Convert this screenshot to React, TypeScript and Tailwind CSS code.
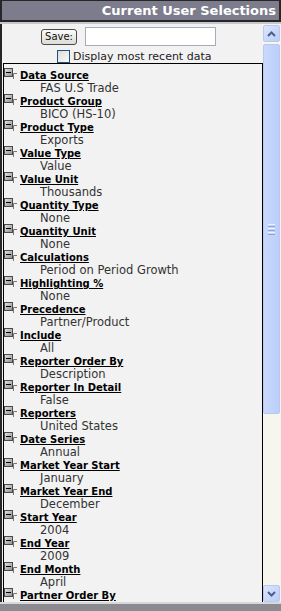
import React from "react";

const items: [string, string][] = [
  ["Data Source", "FAS U.S Trade"],
  ["Product Group", "BICO (HS-10)"],
  ["Product Type", "Exports"],
  ["Value Type", "Value"],
  ["Value Unit", "Thousands"],
  ["Quantity Type", "None"],
  ["Quantity Unit", "None"],
  ["Calculations", "Period on Period Growth"],
  ["Highlighting %", "None"],
  ["Precedence", "Partner/Product"],
  ["Include", "All"],
  ["Reporter Order By", "Description"],
  ["Reporter In Detail", "False"],
  ["Reporters", "United States"],
  ["Date Series", "Annual"],
  ["Market Year Start", "January"],
  ["Market Year End", "December"],
  ["Start Year", "2004"],
  ["End Year", "2009"],
  ["End Month", "April"],
  ["Partner Order By", "Description"],
];

function Minus() {
  return (
    <svg width="16" height="13" viewBox="0 0 16 13" className="shrink-0 -mt-[1px]">
      <defs>
        <linearGradient id="mg" x1="0" y1="0" x2="1" y2="1">
          <stop offset="0" stopColor="#e6e6e6" />
          <stop offset="1" stopColor="#8c8c8c" />
        </linearGradient>
      </defs>
      <rect x="0.5" y="0.5" width="8" height="8" fill="url(#mg)" stroke="#4a4a4a" />
      <line x1="2" y1="4.5" x2="7" y2="4.5" stroke="#000" />
      <line x1="9.5" y1="5.5" x2="9.5" y2="11" stroke="#777" />
      <line x1="9.5" y1="5.5" x2="13" y2="5.5" stroke="#777" />
    </svg>
  );
}

function Arrow({ up }: { up: boolean }) {
  return (
    <div className="w-[17px] h-[17px] rounded-[2px] border border-[#b7c9f1] bg-gradient-to-br from-[#dde7fd] to-[#b9cdf8] flex items-center justify-center">
      <svg width="9" height="6" viewBox="0 0 9 6">
        <path
          d={up ? "M1 5 L4.5 1.5 L8 5" : "M1 1 L4.5 4.5 L8 1"}
          fill="none"
          stroke="#4d6185"
          strokeWidth="2"
        />
      </svg>
    </div>
  );
}

export default function App() {
  return (
    <div
      className="w-[281px] h-[611px] bg-[#f2f2f2] overflow-hidden flex flex-col"
      style={{ fontFamily: "Verdana, 'DejaVu Sans', sans-serif" }}
    >
      {/* header */}
      <div className="h-[22px] shrink-0 border-t border-l-2 border-r-2 border-b-2 border-[#262626] bg-[#7c7c8c] flex items-center justify-end pr-[3px]">
        <span className="text-white font-bold text-[13px] leading-none">
          Current User Selections
        </span>
      </div>
      <div className="h-[2px] shrink-0 bg-[#c8c8c8]" />

      {/* body */}
      <div className="h-[578px] shrink-0 flex border-l-2 border-[#262626]">
        <div className="w-[261px] shrink-0 overflow-hidden flex flex-col">
          <div className="h-[19px] mt-[3px] flex items-center pl-[39px] gap-[8px] shrink-0">
            <button className="w-[36px] h-[16px] rounded-[3px] border border-[#4a4a4a] bg-gradient-to-b from-[#fbfbfb] to-[#dcdcd4] text-[10px] leading-none text-[#111] flex items-center justify-center">
              Save:
            </button>
            <input className="w-[131px] h-[19px] bg-white border border-[#a5acb5] outline-none" />
          </div>
          <div className="h-[14px] mt-[3px] flex items-center pl-[55px] shrink-0">
            <span className="w-[13px] h-[13px] border border-[#1c5180] bg-gradient-to-br from-[#dcdcd6] to-[#fbfbfa] shrink-0" />
            <span className="ml-[3px] text-[11px] leading-none text-[#222]">Display most recent data</span>
          </div>
          <div className="ml-[1px] border border-black pt-[5px] flex flex-col">
            {items.map(([t, v]) => (
              <div key={t} className="flex flex-col">
                <div className="h-[13px] flex items-start">
                  <Minus />
                  <span className="text-[10px] leading-[13px] font-bold underline text-black">{t}</span>
                </div>
                <div className="h-[13px] pl-[36px] text-[11.5px] leading-[13px] text-[#333]">{v}</div>
              </div>
            ))}
          </div>
        </div>

        {/* scrollbar */}
        <div className="w-[17px] shrink-0 flex flex-col pt-[1px] bg-[#f6f5ee]">
          <Arrow up />
          <div className="flex-1 flex flex-col pt-[2px] pb-[2px]">
            <div className="h-[370px] rounded-[2px] border border-[#b7c9f1] bg-gradient-to-r from-[#c9d8fc] to-[#bccff9] flex flex-col items-center justify-center gap-[1px]">
              <div className="w-[7px] h-[1px] bg-[#eef3ff]" />
              <div className="w-[7px] h-[1px] bg-[#8ca5dc]" />
              <div className="w-[7px] h-[1px] bg-[#eef3ff]" />
              <div className="w-[7px] h-[1px] bg-[#8ca5dc]" />
              <div className="w-[7px] h-[1px] bg-[#eef3ff]" />
              <div className="w-[7px] h-[1px] bg-[#8ca5dc]" />
            </div>
          </div>
          <Arrow up={false} />
        </div>
        <div className="w-[1px] shrink-0 bg-[#f4f4f4]" />
      </div>

      <div className="h-[2px] shrink-0 bg-[#d8d8d8]" />
      <div className="flex-1 bg-[#8a8a90]" />
    </div>
  );
}
